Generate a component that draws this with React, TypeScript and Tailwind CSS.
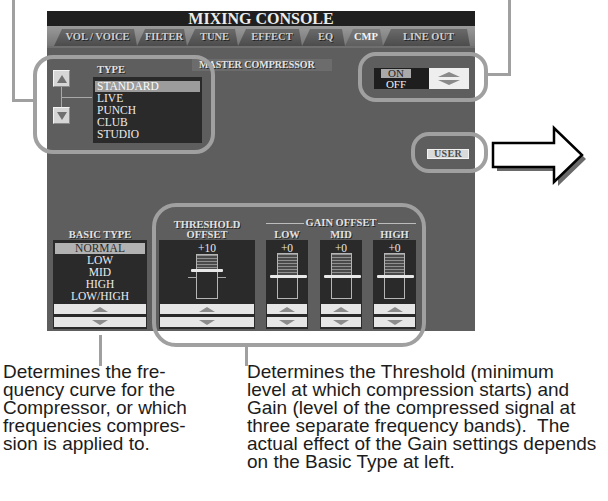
import React from "react";

const SERIF = "font-['Liberation_Serif','Times_New_Roman',serif]";

function UpTri() {
  return <div className="w-0 h-0 border-l-[8px] border-r-[8px] border-b-[5px] border-l-transparent border-r-transparent border-b-[#8c8c8c]" />;
}
function DownTri() {
  return <div className="w-0 h-0 border-l-[8px] border-r-[8px] border-t-[5px] border-l-transparent border-r-transparent border-t-[#8c8c8c]" />;
}

function BoxButtons() {
  return (
    <div className="mt-auto flex flex-col gap-[3px] px-[1px] pb-[2px] w-full">
      <div className="h-[10px] bg-[#e6e6e6] flex items-center justify-center">
        <UpTri />
      </div>
      <div className="h-[10px] bg-[#e6e6e6] flex items-center justify-center">
        <DownTri />
      </div>
    </div>
  );
}

function GainCol({ label, w }: { label: string; w: string }) {
  return (
    <div className={`flex flex-col items-center ${w}`}>
      <div className="h-[10px] leading-[10px] text-[10.5px] font-bold text-[#e2e2e2] [text-shadow:1px_1px_0_#2a2a2a]">{label}</div>
      <div className="w-full h-[89px] bg-[#2a2a2a] flex flex-col items-center">
        <div className="mt-[3px] h-[10px] leading-[10px] text-[11.5px] text-[#e8e8e8]">+0</div>
        <div className="relative w-[21px] h-[46px] border border-[#b5b5b5]">
          <div className="h-[23px] w-full bg-[repeating-linear-gradient(to_bottom,#909090_0px,#909090_1px,#4a4a4a_1px,#4a4a4a_3px)]" />
          <div className="absolute top-[21px] left-[-8px] w-[37px] h-[3px] bg-[#e8e8e8] rounded-[1px]" />
        </div>
        <BoxButtons />
      </div>
    </div>
  );
}

function Tab({ label, w, active }: { label: string; w: string; active?: boolean }) {
  return (
    <div
      className={`${w} h-[17px] flex items-center justify-center pl-[4px] text-[10.5px] font-bold leading-none [clip-path:polygon(8px_0,calc(100%_-_3px)_0,100%_100%,0_100%)] ${
        active
          ? "bg-[linear-gradient(to_bottom,#7a7a7a,#5e5e5e)] text-[#f4f4f4]"
          : "bg-[linear-gradient(to_bottom,#6a6a6a,#4c4c4c)] text-[#cfcfcf] [text-shadow:1px_1px_0_#222]"
      }`}
    >
      {label}
    </div>
  );
}

export default function App() {
  return (
    <div className="relative w-[608px] h-[501px] bg-white overflow-hidden pt-[11px]">
      {/* Panel */}
      <div className={`ml-[47px] w-[428px] h-[320px] flex flex-col bg-[#5e5e5e] ${SERIF}`}>
        <div className="h-[15px] bg-[#1f1f1f] flex items-center justify-center">
          <span className="text-[16px] font-bold leading-none text-[#ececec] mt-[1px]">MIXING CONSOLE</span>
        </div>
        <div className="h-[20px] flex items-end pl-[7px] bg-[linear-gradient(to_bottom,#9a9a9a,#767676)]">
          <Tab label="VOL / VOICE" w="w-[83px]" />
          <Tab label="FILTER" w="w-[50px]" />
          <Tab label="TUNE" w="w-[51px]" />
          <Tab label="EFFECT" w="w-[64px]" />
          <Tab label="EQ" w="w-[43px]" />
          <Tab label="CMP" w="w-[38px]" active />
          <Tab label="LINE OUT" w="w-[87px]" />
        </div>
        <div className="flex-1 flex flex-col border-t-2 border-[#6f6f6f]">
          {/* Top part */}
          <div className="flex items-start">
            {/* arrows */}
            <div className="ml-[6px] mt-[22px] w-[17px] flex flex-col">
              <div className="h-[17px] bg-[#d6d6d6] border border-t-[#f4f4f4] border-l-[#f4f4f4] border-b-[#8a8a8a] border-r-[#8a8a8a] flex items-center justify-center">
                <div className="w-0 h-0 border-l-[5px] border-r-[5px] border-b-[8px] border-l-transparent border-r-transparent border-b-[#707070]" />
              </div>
              <div className="relative h-[20px]">
                <div className="absolute left-[8px] top-0 w-[1px] h-full bg-[#a8a8a8]" />
                <div className="absolute left-[8px] top-[10px] w-[31px] h-[1px] bg-[#a8a8a8]" />
              </div>
              <div className="h-[17px] bg-[#d6d6d6] border border-t-[#f4f4f4] border-l-[#f4f4f4] border-b-[#8a8a8a] border-r-[#8a8a8a] flex items-center justify-center">
                <div className="w-0 h-0 border-l-[5px] border-r-[5px] border-t-[8px] border-l-transparent border-r-transparent border-t-[#707070]" />
              </div>
            </div>
            {/* TYPE list */}
            <div className="ml-[23px] w-[109px] flex flex-col">
              <div className="mt-[16px] h-[12px] pl-[4px] text-[10.5px] font-bold leading-[12px] text-[#e2e2e2] [text-shadow:1px_1px_0_#2a2a2a]">TYPE</div>
              <div className="mt-[1px] h-[66px] bg-[#2a2a2a] pt-[3px] px-[2px] flex flex-col text-[11.5px] text-[#ececec]">
                <div className="h-[12px] flex items-center"><div className="w-full h-[11px] bg-[#9c9c9c] pl-[2px] leading-[11px] text-[#fafafa]">STANDARD</div></div>
                <div className="h-[12px] leading-[12px] pl-[2px]">LIVE</div>
                <div className="h-[12px] leading-[12px] pl-[2px]">PUNCH</div>
                <div className="h-[12px] leading-[12px] pl-[2px]">CLUB</div>
                <div className="h-[12px] leading-[12px] pl-[2px]">STUDIO</div>
              </div>
            </div>
            {/* Master compressor label */}
            <div className="-ml-[10px] mt-[11px] w-[140px] h-[12px] bg-[#6c6c6c] pl-[7px] text-[10px] font-bold leading-[12px] text-[#e4e4e4] [text-shadow:1px_1px_0_#2a2a2a]">
              MASTER COMPRESSOR
            </div>
            {/* Right column */}
            <div className="ml-auto mr-[6px] flex flex-col items-end">
              <div className="mt-[20px] flex h-[21px]">
                <div className="w-[55px] bg-[#1e1e1e] flex flex-col items-start pl-[7px] pt-[1px]">
                  <div className="w-[30px] h-[9px] bg-[#a9a9a9] text-[#1e1e1e] text-[11px] leading-[9px] text-center">ON</div>
                  <div className="w-[30px] text-center text-[11px] leading-[10px] text-[#f0f0f0] mt-[1px]">OFF</div>
                </div>
                <div className="w-[40px] bg-[#eeeeee] flex flex-col items-center justify-center gap-[3px]">
                  <div className="w-0 h-0 border-l-[11px] border-r-[11px] border-b-[5px] border-l-transparent border-r-transparent border-b-[#8a8a8a]" />
                  <div className="w-0 h-0 border-l-[11px] border-r-[11px] border-t-[5px] border-l-transparent border-r-transparent border-t-[#8a8a8a]" />
                </div>
              </div>
              <div className="mt-[60px] w-[42px] h-[10px] bg-[#dadada] border border-[#f2f2f2] flex items-center justify-center text-[10px] font-bold leading-none tracking-[0.3px] text-[#4a4a4a]">
                USER
              </div>
            </div>
          </div>

          {/* Bottom part */}
          <div className="mt-auto pb-[2px] pl-[6px] flex items-end">
            {/* BASIC TYPE */}
            <div className="w-[94px] flex flex-col items-center">
              <div className="h-[10px] leading-[10px] text-[10.5px] font-bold text-[#e2e2e2] [text-shadow:1px_1px_0_#2a2a2a]">BASIC TYPE</div>
              <div className="w-full h-[89px] bg-[#2a2a2a] flex flex-col items-stretch">
                <div className="pt-[2px] px-[2px] flex flex-col text-[11.5px] text-[#ececec] text-center">
                  <div className="h-[12px] flex items-center"><div className="w-full h-[11px] bg-[#b2b2b2] leading-[11px] text-[#2a2a2a]">NORMAL</div></div>
                  <div className="h-[12px] leading-[12px]">LOW</div>
                  <div className="h-[12px] leading-[12px]">MID</div>
                  <div className="h-[12px] leading-[12px]">HIGH</div>
                  <div className="h-[12px] leading-[12px]">LOW/HIGH</div>
                </div>
                <BoxButtons />
              </div>
            </div>
            {/* THRESHOLD */}
            <div className="ml-[12px] w-[96px] flex flex-col items-center">
              <div className="text-center text-[10.5px] font-bold leading-[10px] text-[#e2e2e2] [text-shadow:1px_1px_0_#2a2a2a]">
                THRESHOLD
                <br />
                OFFSET
              </div>
              <div className="w-full h-[89px] bg-[#2a2a2a] flex flex-col items-center">
                <div className="mt-[3px] h-[11px] leading-[11px] text-[11.5px] text-[#e8e8e8]">+10</div>
                <div className="relative w-[22px] h-[45px] border border-[#b5b5b5]">
                  <div className="h-[15px] w-full bg-[repeating-linear-gradient(to_bottom,#909090_0px,#909090_1px,#4a4a4a_1px,#4a4a4a_3px)]" />
                  <div className="absolute top-[14px] left-[-6px] w-[32px] h-[3px] bg-[#e8e8e8] rounded-[1px]" />
                  <div className="absolute top-[22px] left-[-9px] w-[8px] h-[1px] bg-[#a8a8a8]" />
                  <div className="absolute top-[22px] right-[-9px] w-[8px] h-[1px] bg-[#a8a8a8]" />
                </div>
                <BoxButtons />
              </div>
            </div>
            {/* GAIN OFFSET */}
            <div className="ml-[11px] w-[150px] flex flex-col">
              <div className="h-[10px] mb-[2px] flex items-center gap-[2px]">
                <div className="flex-1 h-[1px] bg-[#bcbcbc]" />
                <div className="text-[10.5px] font-bold leading-[10px] text-[#e2e2e2] [text-shadow:1px_1px_0_#2a2a2a]">GAIN OFFSET</div>
                <div className="flex-1 h-[1px] bg-[#bcbcbc]" />
              </div>
              <div className="flex">
                <GainCol label="LOW" w="w-[42px]" />
                <div className="ml-[12px]"><GainCol label="MID" w="w-[42px]" /></div>
                <div className="ml-[11px]"><GainCol label="HIGH" w="w-[43px]" /></div>
              </div>
            </div>
          </div>
        </div>
      </div>

      {/* Description texts */}
      <div className="mt-[32px] flex font-['Liberation_Sans',Arial,sans-serif] text-[19px] leading-[18px] text-[#1c1c1c] whitespace-pre">
        <div className="pl-[3px] w-[247px]">
          {"Determines the fre-\nquency curve for the\nCompressor, or which\nfrequencies compres-\nsion is applied to."}
        </div>
        <div>
          {"Determines the Threshold (minimum\nlevel at which compression starts) and\nGain (level of the compressed signal at\nthree separate frequency bands).  The\nactual effect of the Gain settings depends\non the Basic Type at left."}
        </div>
      </div>

      {/* Annotation frames */}
      <div className="absolute left-[33px] top-[55px] w-[182px] h-[99px] border-[4px] border-[#a0a0a0] rounded-[20px] pointer-events-none" />
      <div className="absolute left-[358px] top-[52px] w-[130px] h-[50px] border-[4px] border-[#a0a0a0] rounded-[18px] pointer-events-none" />
      <div className="absolute left-[411px] top-[132px] w-[77px] h-[41px] border-[4px] border-[#a0a0a0] rounded-[18px] pointer-events-none" />
      <div className="absolute left-[152px] top-[203px] w-[274px] h-[144px] border-[4px] border-[#a0a0a0] rounded-[24px] pointer-events-none" />

      {/* Connectors */}
      <div className="absolute left-[12px] top-0 w-[3px] h-[102px] bg-[#a0a0a0]" />
      <div className="absolute left-[12px] top-[99px] w-[22px] h-[3px] bg-[#a0a0a0]" />
      <div className="absolute left-[487px] top-[73px] w-[24px] h-[3px] bg-[#a0a0a0]" />
      <div className="absolute left-[508px] top-0 w-[3px] h-[76px] bg-[#a0a0a0]" />
      <div className="absolute left-[99px] top-[335px] w-[3px] h-[31px] bg-[#a0a0a0]" />
      <div className="absolute left-[245px] top-[347px] w-[3px] h-[19px] bg-[#a0a0a0]" />

      {/* Big arrow */}
      <svg className="absolute left-[488px] top-[124px]" width="104" height="68" viewBox="0 0 104 68">
        <polygon points="9,23 70,23 70,8 98,35 70,62 70,47 9,47" fill="#6a6a6a" />
        <polygon points="5,19 66,19 66,4 94,31 66,58 66,43 5,43" fill="#ffffff" stroke="#000" strokeWidth="2.5" strokeLinejoin="miter" />
      </svg>
    </div>
  );
}
